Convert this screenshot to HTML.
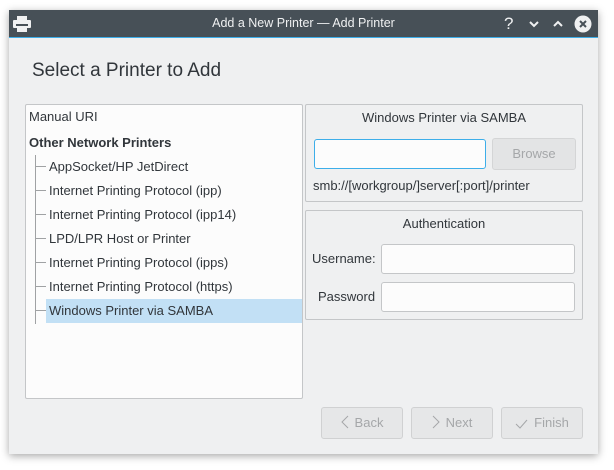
<!DOCTYPE html>
<html><head><style>
*{margin:0;padding:0;box-sizing:border-box}
body{width:614px;height:470px;background:#fff;font-family:"Liberation Sans",sans-serif;font-size:13px;color:#31363b;position:relative;overflow:hidden}
.win{position:absolute;left:9px;top:10px;width:589px;height:444px;background:#eff0f1;box-shadow:0 2px 8px rgba(0,0,0,.35)}
.tb{position:absolute;left:0;top:0;width:589px;height:28px;background:#475057;border-bottom:1px solid #3daee9;color:#eff0f1;font-size:12.5px;text-align:center;line-height:27px}
.a{position:absolute}
.box{position:absolute;border:1px solid #c4c6c8;border-radius:2px}
.row{position:absolute;left:24px;height:24px;line-height:24px;white-space:nowrap}
.in{position:absolute;background:#fcfcfc;border:1px solid #c4c6c8;border-radius:3px}
.btn{position:absolute;top:397px;width:82px;height:32px;border:1px solid #d0d1d2;border-radius:3px;background:#e6e7e8;color:#a5a7a9;text-align:center;line-height:30px;font-size:13px}
.btn svg{vertical-align:-2px;margin-right:6px}
</style></head><body>
<div class="win">
 <div class="tb">Add a New Printer — Add Printer
  <svg class="a" style="left:3px;top:5px" width="20" height="18" viewBox="0 0 20 18"><rect x="5" y="1" width="10" height="4" fill="#eff0f1"/><rect x="1" y="5" width="18" height="8" rx="1" fill="#eff0f1"/><rect x="4" y="9" width="12" height="2" fill="#475057"/><rect x="5" y="13" width="10" height="4" fill="#eff0f1"/></svg>
  <span class="a" style="left:495px;top:0;font-size:17px">?</span>
  <svg class="a" style="left:519px;top:9px" width="12" height="10"><path d="M2 3 L6 7 L10 3" stroke="#eff0f1" stroke-width="2" fill="none"/></svg>
  <svg class="a" style="left:543px;top:9px" width="12" height="10"><path d="M2 7 L6 3 L10 7" stroke="#eff0f1" stroke-width="2" fill="none"/></svg>
  <svg class="a" style="left:565px;top:5px" width="18" height="18"><circle cx="9" cy="9" r="8.5" fill="#eff0f1"/><path d="M6 6 L12 12 M12 6 L6 12" stroke="#475057" stroke-width="2"/></svg>
 </div>
 <div class="a" style="left:23px;top:50px;font-size:19px;color:#31363b">Select a Printer to Add</div>
 <div class="box" style="left:16px;top:94px;width:278px;height:295px;background:#fcfcfc">
  <div class="row" style="left:3px;top:0">Manual URI</div>
  <div class="row" style="left:3px;top:26px;font-weight:bold">Other Network Printers</div>
  <div class="a" style="left:9px;top:50px;width:1px;height:169px;background:#a0a2a4"></div>
  <div class="a" style="left:20px;top:194px;width:256px;height:24px;background:#c2e0f5"></div>
  <div class="row" style="left:23px;top:50px">AppSocket/HP JetDirect</div>
  <div class="row" style="left:23px;top:74px">Internet Printing Protocol (ipp)</div>
  <div class="row" style="left:23px;top:98px">Internet Printing Protocol (ipp14)</div>
  <div class="row" style="left:23px;top:122px">LPD/LPR Host or Printer</div>
  <div class="row" style="left:23px;top:146px">Internet Printing Protocol (ipps)</div>
  <div class="row" style="left:23px;top:170px">Internet Printing Protocol (https)</div>
  <div class="row" style="left:23px;top:194px">Windows Printer via SAMBA</div>
  <div class="a" style="left:10px;top:61px;width:10px;height:1px;background:#a0a2a4;box-shadow:0 24px #a0a2a4,0 48px #a0a2a4,0 72px #a0a2a4,0 96px #a0a2a4,0 120px #a0a2a4,0 144px #a0a2a4"></div>
 </div>
 <div class="box" style="left:296px;top:94px;width:278px;height:98px">
  <div class="a" style="left:0;width:276px;top:5px;text-align:center">Windows Printer via SAMBA</div>
  <div class="in" style="left:8px;top:34px;width:172px;height:30px;border-color:#3daee9"></div>
  <div class="a" style="left:186px;top:33px;width:84px;height:32px;background:#e3e4e5;border:1px solid #d4d5d6;border-radius:3px;color:#a5a7a9;text-align:center;line-height:30px">Browse</div>
  <div class="a" style="left:7px;top:73px">smb://[workgroup/]server[:port]/printer</div>
 </div>
 <div class="box" style="left:296px;top:200px;width:278px;height:110px">
  <div class="a" style="left:0;width:276px;top:5px;text-align:center">Authentication</div>
  <div class="a" style="left:6px;top:40px">Username:</div>
  <div class="in" style="left:75px;top:33px;width:194px;height:30px"></div>
  <div class="a" style="left:12px;top:78px">Password</div>
  <div class="in" style="left:75px;top:71px;width:194px;height:30px"></div>
 </div>
 <div class="btn" style="left:312px"><svg width="8" height="14"><path d="M7 1 L1 7 L7 13" stroke="#a5a7a9" fill="none"/></svg>Back</div>
 <div class="btn" style="left:402px"><svg width="8" height="14"><path d="M1 1 L7 7 L1 13" stroke="#a5a7a9" fill="none"/></svg>Next</div>
 <div class="btn" style="left:492px"><svg width="13" height="12"><path d="M1 7 L5 11 L12 3" stroke="#a5a7a9" fill="none"/></svg>Finish</div>
</div>
</body></html>
